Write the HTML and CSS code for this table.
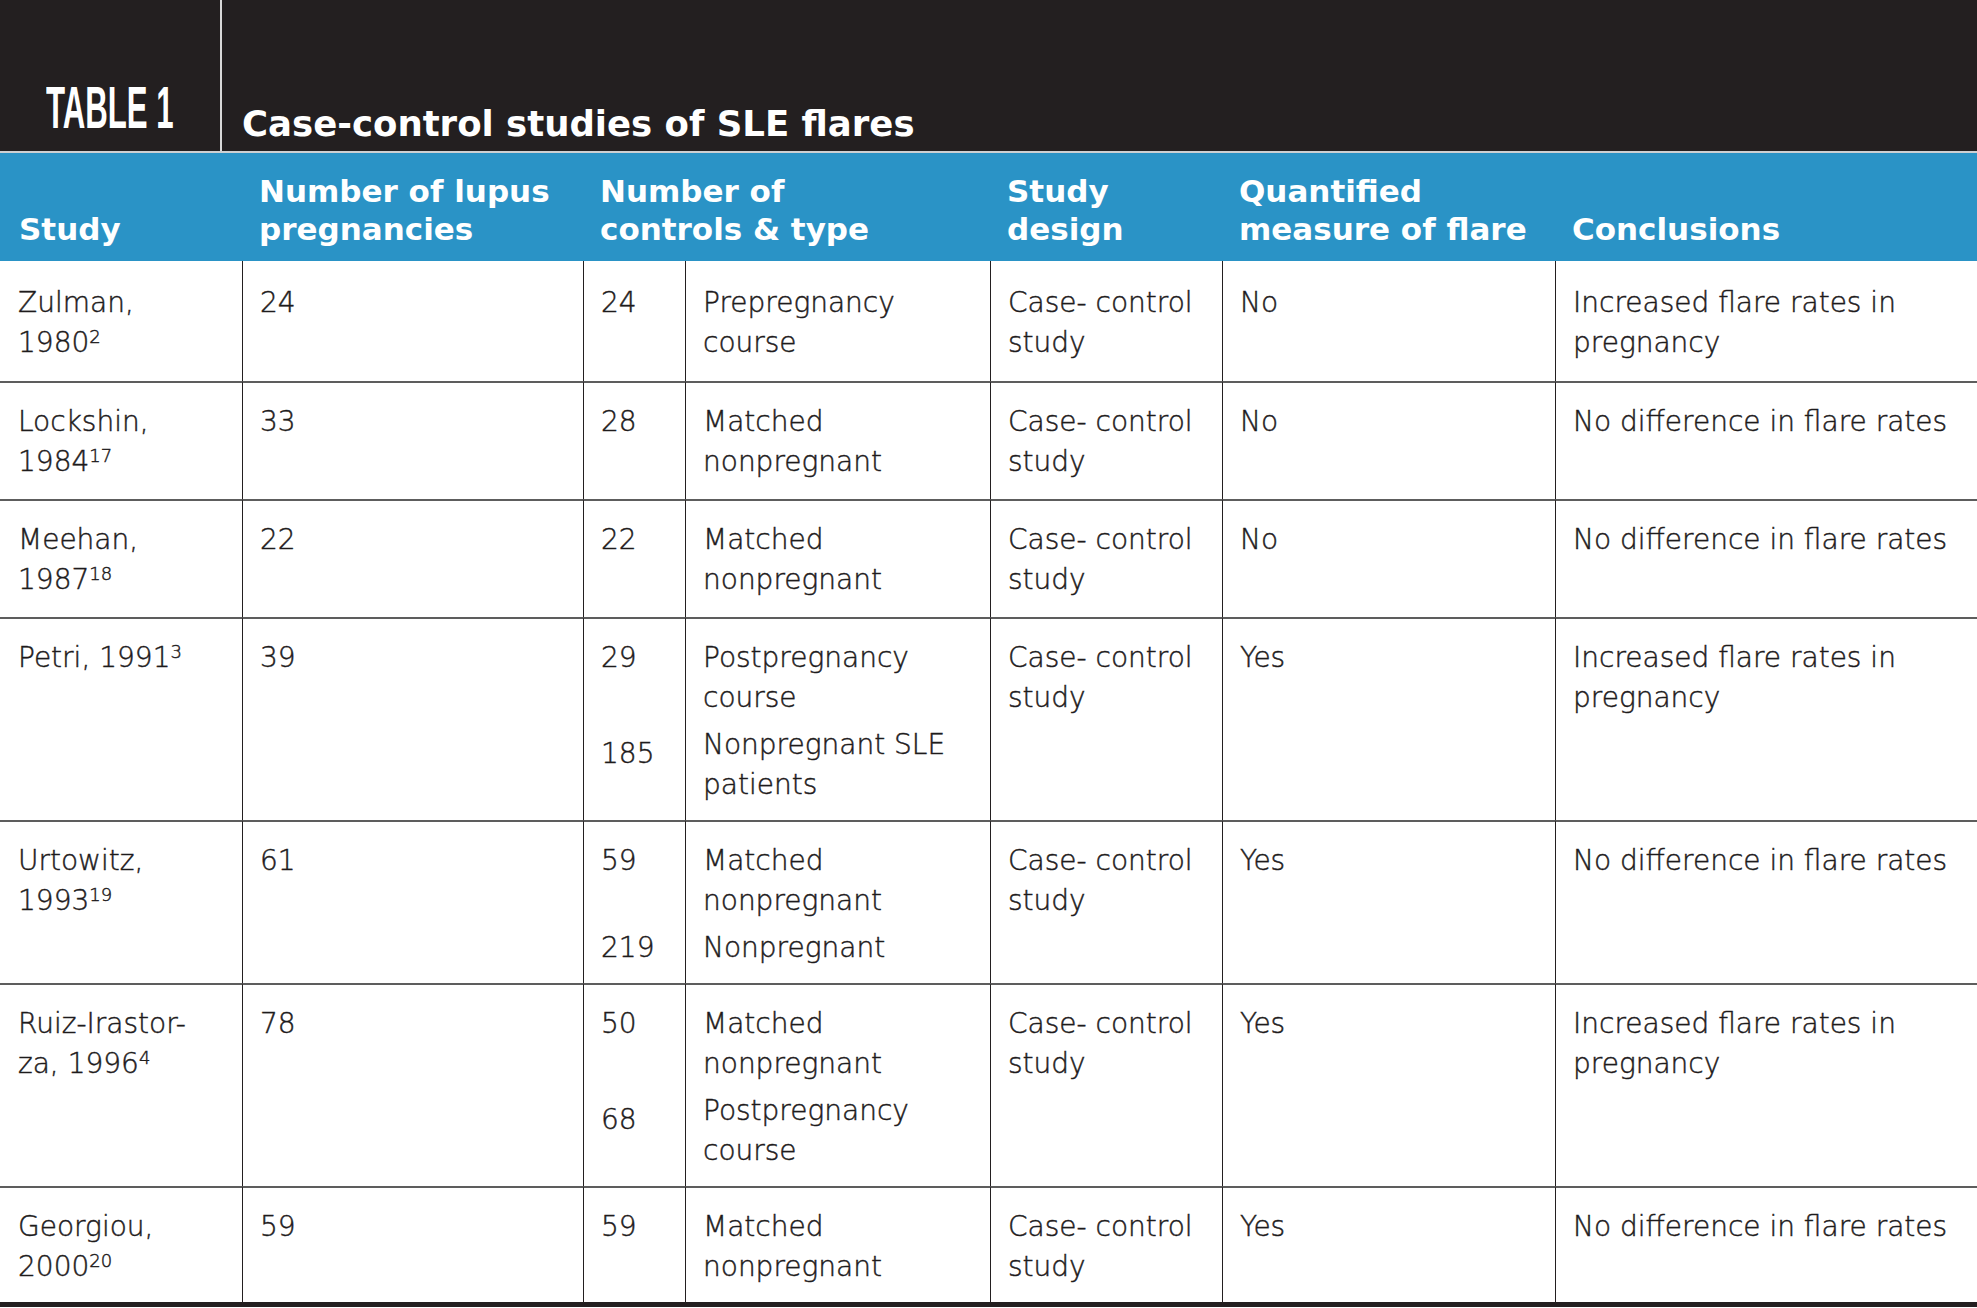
FILE: index.html
```html
<!DOCTYPE html>
<html lang="en">
<head>
<meta charset="utf-8">
<title>Table 1: Case-control studies of SLE flares</title>
<link rel="stylesheet" href="styles.css">
</head>
<body>
<div class="page">
  <header class="caption">
    <div class="caption-label"><span class="label-text">TABLE 1</span></div>
    <h1 class="caption-title">Case-control studies of SLE flares</h1>
  </header>
  <table class="tbl">
    <colgroup>
      <col class="c-study"><col class="c-n"><col class="c-cn"><col class="c-ct"><col class="c-design"><col class="c-measure"><col class="c-concl">
    </colgroup>
    <thead>
      <tr>
        <th class="h-first">Study</th>
        <th>Number of lupus<br>pregnancies</th>
        <th colspan="2">Number of<br>controls &amp; type</th>
        <th>Study<br>design</th>
        <th>Quantified<br>measure of flare</th>
        <th>Conclusions</th>
      </tr>
    </thead>
    <tbody>
      <tr>
        <td class="study">Zulman,<br>1980<sup class="ref">2</sup></td>
        <td>24</td>
        <td>24</td>
        <td>Prepregnancy<br>course</td>
        <td>Case- control<br>study</td>
        <td>No</td>
        <td>Increased flare rates in<br>pregnancy</td>
      </tr>
      <tr>
        <td class="study">Lockshin,<br>1984<sup class="ref">17</sup></td>
        <td>33</td>
        <td>28</td>
        <td>Matched<br>nonpregnant</td>
        <td>Case- control<br>study</td>
        <td>No</td>
        <td>No difference in flare rates</td>
      </tr>
      <tr>
        <td class="study">Meehan,<br>1987<sup class="ref">18</sup></td>
        <td>22</td>
        <td>22</td>
        <td>Matched<br>nonpregnant</td>
        <td>Case- control<br>study</td>
        <td>No</td>
        <td>No difference in flare rates</td>
      </tr>
      <tr class="lead">
        <td class="study" rowspan="2">Petri, 1991<sup class="ref">3</sup></td>
        <td rowspan="2">39</td>
        <td class="ctl">29</td>
        <td class="ctl">Postpregnancy<br>course</td>
        <td rowspan="2">Case- control<br>study</td>
        <td rowspan="2">Yes</td>
        <td rowspan="2">Increased flare rates in<br>pregnancy</td>
      </tr>
      <tr class="sub">
        <td class="num-low">185</td>
        <td>Nonpregnant SLE<br>patients</td>
      </tr>
      <tr class="lead">
        <td class="study" rowspan="2">Urtowitz,<br>1993<sup class="ref">19</sup></td>
        <td rowspan="2">61</td>
        <td class="ctl">59</td>
        <td class="ctl">Matched<br>nonpregnant</td>
        <td rowspan="2">Case- control<br>study</td>
        <td rowspan="2">Yes</td>
        <td rowspan="2">No difference in flare rates</td>
      </tr>
      <tr class="sub">
        <td>219</td>
        <td>Nonpregnant</td>
      </tr>
      <tr class="lead">
        <td class="study" rowspan="2">Ruiz-Irastor-<br>za, 1996<sup class="ref">4</sup></td>
        <td rowspan="2">78</td>
        <td class="ctl">50</td>
        <td class="ctl">Matched<br>nonpregnant</td>
        <td rowspan="2">Case- control<br>study</td>
        <td rowspan="2">Yes</td>
        <td rowspan="2">Increased flare rates in<br>pregnancy</td>
      </tr>
      <tr class="sub">
        <td class="num-low">68</td>
        <td>Postpregnancy<br>course</td>
      </tr>
      <tr class="last">
        <td class="study">Georgiou,<br>2000<sup class="ref">20</sup></td>
        <td>59</td>
        <td>59</td>
        <td>Matched<br>nonpregnant</td>
        <td>Case- control<br>study</td>
        <td>Yes</td>
        <td>No difference in flare rates</td>
      </tr>
    </tbody>
  </table>
</div>
</body>
</html>
```

FILE: styles.css
```css
html, body {
  margin: 0;
  padding: 0;
  background: #ffffff;
}

.page {
  width: 1977px;
  height: 1308px;
  overflow: hidden;
  background: #ffffff;
}

/* ---------- Caption band ---------- */
.caption {
  display: flex;
  align-items: stretch;
  height: 151px;
  background: #231f20;
  border-bottom: 2px solid #cdd0d3;
}

.caption-label {
  flex: 0 0 222px;
  width: 222px;
  min-width: 0;
  box-sizing: border-box;
  display: flex;
  align-items: flex-end;
  padding: 0 0 13px 46px;
  border-right: 2px solid #d8d8d8;
  overflow: visible;
}

.label-text {
  display: inline-block;
  flex: none;
  white-space: nowrap;
  color: #ffffff;
  font-family: "Liberation Sans", Arial, sans-serif;
  font-weight: 700;
  font-size: 60px;
  line-height: 60px;
  transform: scaleX(0.52);
  transform-origin: 0 100%;
}

.caption-title {
  align-self: flex-end;
  margin: 0;
  padding: 0 0 7px 20px;
  color: #ffffff;
  font-family: "DejaVu Sans", "Liberation Sans", sans-serif;
  font-weight: 700;
  font-size: 35.5px;
  line-height: 40px;
  white-space: nowrap;
}

/* ---------- Table ---------- */
.tbl {
  width: 1977px;
  table-layout: fixed;
  border-collapse: separate;
  border-spacing: 0;
  border-bottom: 5px solid #231f20;
}

.c-study { width: 242px; }
.c-n { width: 341px; }
.c-cn { width: 102px; }
.c-ct { width: 305px; }
.c-design { width: 232px; }
.c-measure { width: 333px; }
.c-concl { width: 422px; }

.tbl th {
  background: #2a93c6;
  color: #ffffff;
  text-align: left;
  vertical-align: bottom;
  font-family: "DejaVu Sans", "Liberation Sans", sans-serif;
  font-weight: 700;
  font-size: 31px;
  line-height: 38px;
  padding: 19px 6px 13px 17px;
  white-space: nowrap;
}

.tbl th.h-first {
  padding-left: 19px;
}

.tbl td {
  vertical-align: top;
  text-align: left;
  color: #1e1b1c;
  font-family: "DejaVu Sans", "Liberation Sans", sans-serif;
  font-weight: 300;
  font-size: 28px;
  line-height: 40px;
  -webkit-text-stroke: 0.45px #1e1b1c;
  padding: 19px 6px 17px 17px;
  border-top: 2px solid #5d5d5d;
  border-left: 1px solid #231f20;
  white-space: nowrap;
}

.tbl td.study {
  border-left: 0;
  padding-left: 18px;
}

.tbl tbody tr:first-child td {
  border-top: 0;
  padding-top: 22px;
  padding-bottom: 18px;
}

.tbl tr.lead td.ctl {
  padding-bottom: 0;
}

.tbl tr.sub td {
  border-top: 0;
  padding-top: 7px;
  padding-bottom: 15px;
}

.tbl tr.sub td.num-low {
  padding-top: 16px;
}

.tbl tr.last td {
  padding-bottom: 15px;
}

.ref {
  font-size: 18px;
  line-height: 0;
  vertical-align: 9px;
}
```
